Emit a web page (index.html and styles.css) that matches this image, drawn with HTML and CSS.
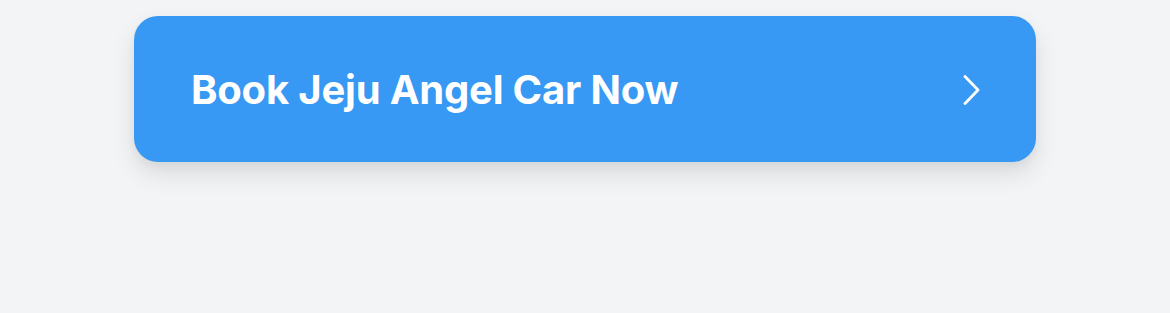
FILE: index.html
```html
<!DOCTYPE html>
<html lang="en">
<head>
<meta charset="utf-8">
<link rel="stylesheet" href="styles.css">
</head>
<body>
<main class="page">
  <a class="cta" href="#">
    <span class="cta-label">Book Jeju Angel Car Now</span>
    <svg class="cta-icon" width="20" height="30" viewBox="0 0 20 30" aria-hidden="true">
      <path d="M3 1.5 L16 15 L3 28.5" fill="none" stroke="#fff" stroke-width="2.8" stroke-linecap="round" stroke-linejoin="round"/>
    </svg>
  </a>
</main>
</body>
</html>
```
FILE: styles.css
```css
html, body {
  margin: 0;
  padding: 0;
  background: #f3f4f6;
}
.page {
  display: flex;
  justify-content: center;
  padding-top: 16px;
  height: 297px;
}
.cta {
  box-sizing: border-box;
  width: 902px;
  height: 146px;
  background: #3799f3;
  border-radius: 24px;
  display: flex;
  align-items: center;
  justify-content: space-between;
  padding: 2px 54px 0 57px;
  text-decoration: none;
  box-shadow: 0 12px 24px rgba(0, 0, 0, 0.10), 0 4px 8px rgba(0, 0, 0, 0.04);
}
.cta-label {
  font-family: Inter, "Noto Sans", sans-serif;
  font-weight: 700;
  font-size: 40px;
  letter-spacing: -0.2px;
  color: #ffffff;
  line-height: 1;
}
.cta-icon {
  display: block;
}
```
